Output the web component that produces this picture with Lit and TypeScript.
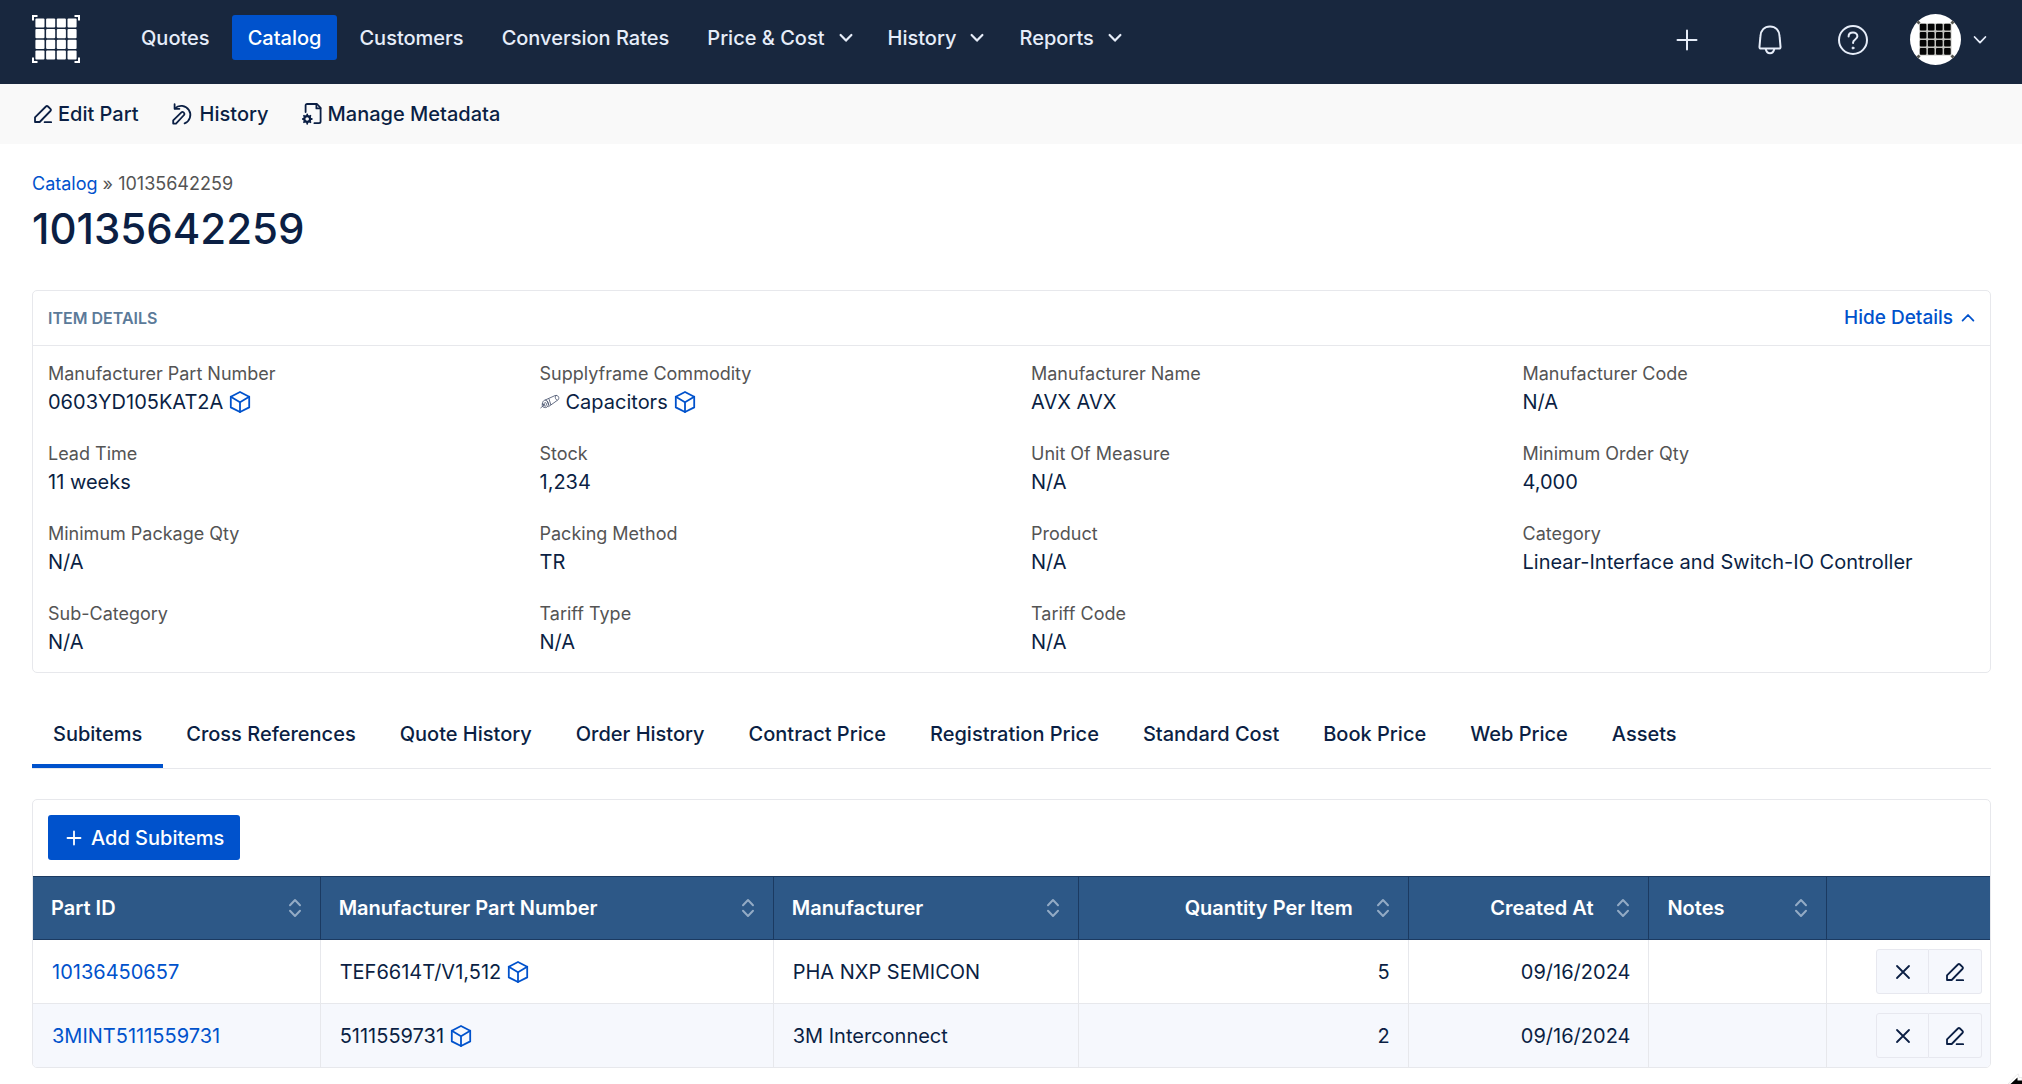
import { LitElement, html, svg, css, nothing } from "lit";
import { customElement, property, state } from "lit/decorators.js";
import { classMap } from "lit/directives/class-map.js";

const GRID = [0, 1, 2, 3];

const ICONS: Record<string, { w: number; h: number; body: unknown }> = {
  pencil: {
    w: 18,
    h: 18,
    body: svg`<path d="M1 17v-4.700L11.900 1.500a1.500 1.500 0 0 1 2.100 0l2.400 2.400a1.500 1.500 0 0 1 0 2.100L5.700 17z"/><path d="M10.600 17.200h6.600"/>`,
  },
  history: {
    w: 22,
    h: 22,
    body: svg`<path d="M2.600 1.200v4.600h4.800"/><path d="M2.900 5.400A9.100 9.100 0 1 1 12.600 20.400"/><path d="M1.200 20.600v-3.200l8.200-8a1.500 1.500 0 0 1 2.100 0l.5.5a1.500 1.500 0 0 1 0 2.100l-8 8.600z"/>`,
  },
  metadata: {
    w: 20,
    h: 22,
    body: svg`<path d="M3.600 9V2.600c0-1 .6-1.600 1.600-1.600H15l3.600 3.800v13.800c0 1-.6 1.600-1.600 1.600h-4.600"/><path d="M14.400 1.200v4.200h4"/><circle cx="5.200" cy="16" r="2.900" stroke-width="2.200"/><path d="M5.200 11.400v1.400M5.200 19.200v1.600M.8 16H2M8.400 16h1.400M2 12.800l1 1M7.400 18.200l1 1M8.400 12.800l-1 1M3 18.200l-1 1"/>`,
  },
  cube: {
    w: 22,
    h: 22,
    body: svg`<path d="M11 1l9.200 4.800v10.600L11 21l-9.200-4.600V5.800z"/><path d="M1.800 5.800L11 11.200l9.200-5.400M11 11.200V21"/>`,
  },
  capacitor: {
    w: 20,
    h: 16,
    body: svg`<path d="M5.200 6L15 1.600c3-1 5.200 2.400 2.800 4.400L8.600 12.600"/><path d="M16.200 1.600c-1.600 1-1.200 3.200.8 4.600M2.400 10c0-2.800 1.800-4.400 3.800-3.600s2.800 3.600 1.800 5.600-3.800 2-5 .8-.6-1.600-.6-2.800z"/><path d="M3.800 10.400c.2-1.600 1.200-2.200 2-1.600s1 2 .2 3-2.200.2-2.200-1.400zM.8 13.800l3.600-3M7 7l1.800 3.800M9 5l1.800 5.600"/>`,
  },
  plus: { w: 22, h: 22, body: svg`<path d="M11 1.500v19M1.500 11h19"/>` },
  bell: {
    w: 26,
    h: 30,
    body: svg`<path d="M3.400 11.400C3.600 5.400 7.400 1.400 13 1.400s9.400 4 9.600 10l.9 10.200c.2 1.200-.4 2-1.500 2H4c-1.100 0-1.700-.8-1.500-2z"/><path d="M8.800 24c.4 2.600 2 4.200 4.200 4.200s3.800-1.600 4.200-4.200"/>`,
  },
  help: {
    w: 32,
    h: 32,
    body: svg`<circle cx="16" cy="16" r="14"/><path d="M11.600 12.400c0-2.600 2-4 4.400-4s4.400 1.600 4.400 3.900c0 3.100-4.300 3.200-4.300 6.100v.6"/><circle cx="16" cy="24" r="1" fill="currentColor" stroke-width="1"/>`,
  },
  down: { w: 14, h: 10, body: svg`<path d="M1.600 2L7 7.600 12.400 2"/>` },
  up: { w: 14, h: 10, body: svg`<path d="M1.600 7.600L7 2l5.400 5.600"/>` },
  sort: { w: 14, h: 20, body: svg`<path d="M2 7.200L7 2l5 5.200M2 12.800L7 18l5-5.200"/>` },
  close: { w: 16, h: 16, body: svg`<path d="M2 2l12 12M14 2L2 14"/>` },
};

@customElement("line-icon")
class LineIcon extends LitElement {
  @property() name = "plus";
  @property({ type: Number }) weight = 2;

  static styles = css`
    :host {
      display: inline-flex;
      flex: none;
    }
    .glyph {
      display: block;
      fill: none;
      stroke: currentColor;
      stroke-linecap: round;
      stroke-linejoin: round;
    }
  `;

  render() {
    const icon = ICONS[this.name];
    return html`<svg
      class="glyph"
      width=${icon.w}
      height=${icon.h}
      viewBox="0 0 ${icon.w} ${icon.h}"
      stroke-width=${this.weight}
      aria-hidden="true"
    >
      ${icon.body}
    </svg>`;
  }
}

@customElement("app-header")
class AppHeader extends LitElement {
  @state() private current = "Catalog";

  private readonly items = [
    { label: "Quotes" },
    { label: "Catalog" },
    { label: "Customers" },
    { label: "Conversion Rates" },
    { label: "Price & Cost", menu: true },
    { label: "History", menu: true },
    { label: "Reports", menu: true },
  ];

  static styles = css`
    :host {
      display: block;
    }
    .bar {
      display: flex;
      align-items: flex-start;
      padding: 14px 32px 19px;
      background: #18273e;
      color: #e6edf9;
    }
    .logo {
      display: block;
      flex: none;
      margin-top: 1px;
    }
    .nav {
      display: flex;
      gap: 6px;
      margin: 1px 0 0 45px;
    }
    .item {
      display: flex;
      align-items: center;
      height: 45px;
      box-sizing: border-box;
      padding: 0 16px;
      border: 0;
      border-radius: 3px;
      background: none;
      color: inherit;
      font: inherit;
      font-weight: 500;
      text-decoration: none;
      white-space: nowrap;
      cursor: pointer;
    }
    .item.menu {
      gap: 14px;
      padding-right: 13px;
    }
    .item.current {
      background: #0052cc;
      color: #fff;
    }
    .tools {
      display: flex;
      align-items: center;
      gap: 51px;
      margin-left: auto;
    }
    .tool,
    .account {
      display: flex;
      align-items: center;
      justify-content: center;
      padding: 0;
      border: 0;
      background: none;
      color: inherit;
      cursor: pointer;
    }
    .tool {
      width: 32px;
      height: 51px;
    }
    .account {
      gap: 12px;
      margin-left: -10px;
      padding-right: 3px;
    }
  `;

  private cells(start: number, pitch: number, size: number) {
    return GRID.map((r) =>
      GRID.map(
        (c) => svg`<rect x=${start + c * pitch} y=${start + r * pitch} width=${size} height=${size} rx="1"/>`
      )
    );
  }

  render() {
    return html`
      <header class="bar">
        <svg class="logo" width="48" height="48" viewBox="0 0 48 48" role="img" aria-label="Home">
          <g fill="#fff">${this.cells(3.4, 10.7, 9.1)}</g>
          <path
            d="M1 5.500V1H5.500M42.500 1H47V5.500M1 42.500V47H5.500M42.500 47H47V42.500"
            fill="none" stroke="#fff" stroke-width="2"
          />
        </svg>
        <nav class="nav" aria-label="Main">
          ${this.items.map((item) => {
            const classes = classMap({
              item: true,
              menu: !!item.menu,
              current: item.label === this.current,
            });
            return item.menu
              ? html`<button class=${classes} type="button" aria-haspopup="true">
                  ${item.label}<line-icon name="down" weight="2.2"></line-icon>
                </button>`
              : html`<a
                  class=${classes}
                  href="#"
                  aria-current=${item.label === this.current ? "page" : nothing}
                  @click=${() => (this.current = item.label)}
                  >${item.label}</a
                >`;
          })}
        </nav>
        <div class="tools">
          <button class="tool" type="button" aria-label="Create"><line-icon name="plus"></line-icon></button>
          <button class="tool" type="button" aria-label="Notifications"><line-icon name="bell"></line-icon></button>
          <button class="tool" type="button" aria-label="Help"><line-icon name="help"></line-icon></button>
          <button class="account" type="button" aria-label="Account">
            <svg width="51" height="51" viewBox="0 0 51 51" aria-hidden="true">
              <circle cx="25.5" cy="25.5" r="25.5" fill="#fff" />
              <rect x="9.5" y="9.5" width="32" height="32" fill="#c4c4c0" />
              <g fill="#050505">${this.cells(9.8, 8.1, 6.6)}</g>
              <path
                d="M7.500 9.500l2-2M41.500 7.500l2 2M7.500 41.500l2 2M41.500 43.500l2-2"
                stroke="#55554f" stroke-width="3"
              />
            </svg>
            <line-icon name="down" weight="1.8"></line-icon>
          </button>
        </div>
      </header>
    `;
  }
}

interface Detail {
  label: string;
  value: string;
  part?: boolean;
  glyph?: string;
}

const DETAILS: Detail[] = [
  { label: "Manufacturer Part Number", value: "0603YD105KAT2A", part: true },
  { label: "Supplyframe Commodity", value: "Capacitors", part: true, glyph: "capacitor" },
  { label: "Manufacturer Name", value: "AVX AVX" },
  { label: "Manufacturer Code", value: "N/A" },
  { label: "Lead Time", value: "11 weeks" },
  { label: "Stock", value: "1,234" },
  { label: "Unit Of Measure", value: "N/A" },
  { label: "Minimum Order Qty", value: "4,000" },
  { label: "Minimum Package Qty", value: "N/A" },
  { label: "Packing Method", value: "TR" },
  { label: "Product", value: "N/A" },
  { label: "Category", value: "Linear-Interface and Switch-IO Controller" },
  { label: "Sub-Category", value: "N/A" },
  { label: "Tariff Type", value: "N/A" },
  { label: "Tariff Code", value: "N/A" },
];

@customElement("item-details")
class ItemDetails extends LitElement {
  @state() private open = true;

  static styles = css`
    :host {
      display: block;
    }
    .card {
      border: 1px solid #e7e8ec;
      border-radius: 5px;
    }
    .head {
      display: flex;
      align-items: center;
      justify-content: space-between;
      height: 54px;
      padding: 0 15px;
    }
    .title {
      margin: 0;
      color: #5b7a99;
      font-size: 16px;
      font-weight: 600;
    }
    .toggle {
      display: flex;
      align-items: center;
      gap: 8px;
      padding: 0;
      border: 0;
      background: none;
      color: #0052cc;
      font: inherit;
      font-size: 19px;
      font-weight: 500;
      cursor: pointer;
    }
    .grid {
      display: grid;
      grid-template-columns: repeat(4, 1fr);
      gap: 24px 39px;
      margin: 0;
      padding: 14px 15px 16px;
      border-top: 1px solid #e7e8ec;
    }
    .label {
      color: #545454;
      font-size: 18px;
      line-height: 28px;
    }
    .value {
      display: flex;
      align-items: center;
      gap: 6px;
      margin: 0;
      line-height: 28px;
      white-space: nowrap;
    }
    .cube {
      color: #0052cc;
    }
    .glyph {
      color: #3f4a66;
    }
  `;

  render() {
    return html`
      <section class="card">
        <div class="head">
          <h2 class="title">ITEM DETAILS</h2>
          <button class="toggle" type="button" aria-expanded=${this.open} @click=${() => (this.open = !this.open)}>
            ${this.open ? "Hide Details" : "Show Details"}
            <line-icon name=${this.open ? "up" : "down"} weight="1.8"></line-icon>
          </button>
        </div>
        ${this.open
          ? html`<dl class="grid">
              ${DETAILS.map(
                (d) => html`<div>
                  <dt class="label">${d.label}</dt>
                  <dd class="value">
                    ${d.glyph ? html`<line-icon class="glyph" name=${d.glyph} weight="0.8"></line-icon>` : nothing}
                    <span>${d.value}</span>
                    ${d.part ? html`<line-icon class="cube" name="cube" weight="1.8"></line-icon>` : nothing}
                  </dd>
                </div>`
              )}
            </dl>`
          : nothing}
      </section>
    `;
  }
}

const COLUMNS = [
  { key: "id", label: "Part ID", share: 14.7 },
  { key: "mpn", label: "Manufacturer Part Number", share: 23.15 },
  { key: "maker", label: "Manufacturer", share: 15.6 },
  { key: "qty", label: "Quantity Per Item", share: 16.85, end: true },
  { key: "created", label: "Created At", share: 12.3, end: true },
  { key: "notes", label: "Notes", share: 9.05 },
];

const ROWS = [
  { id: "10136450657", mpn: "TEF6614T/V1,512", maker: "PHA NXP SEMICON", qty: 5, created: "09/16/2024", notes: "" },
  { id: "3MINT5111559731", mpn: "5111559731", maker: "3M Interconnect", qty: 2, created: "09/16/2024", notes: "" },
];

@customElement("subitem-table")
class SubitemTable extends LitElement {
  static styles = css`
    :host {
      display: block;
    }
    .card {
      overflow: hidden;
      border: 1px solid #e7e8ec;
      border-radius: 5px;
    }
    .actions {
      padding: 15px 15px 16px;
    }
    .add {
      display: flex;
      align-items: center;
      gap: 9px;
      height: 45px;
      padding: 0 16px 0 18px;
      border: 0;
      border-radius: 3px;
      background: #0052cc;
      color: #fff;
      font: inherit;
      font-weight: 500;
      cursor: pointer;
    }
    .plus {
      width: 16px;
      height: 16px;
    }
    .table {
      width: 100%;
      border-collapse: separate;
      border-spacing: 0;
      table-layout: fixed;
    }
    .th {
      box-sizing: border-box;
      height: 64px;
      padding: 0 18px;
      border: solid #1b3a61;
      border-width: 1px 1px 1px 0;
      background: #2d5887;
      color: #fff;
      font-weight: 600;
      text-align: left;
      white-space: nowrap;
    }
    .th.last {
      border-right: 0;
    }
    .sort {
      display: flex;
      align-items: center;
      justify-content: space-between;
      gap: 23px;
      width: 100%;
      padding: 0;
      border: 0;
      background: none;
      color: inherit;
      font: inherit;
      cursor: pointer;
    }
    .sort.end {
      justify-content: flex-end;
    }
    .arrows {
      color: #93abc5;
    }
    .td {
      box-sizing: border-box;
      height: 64px;
      padding: 0 18px 0 19px;
      border-right: 1px solid #e7e8ec;
      border-bottom: 1px solid #e7e8ec;
      white-space: nowrap;
    }
    .td.end {
      text-align: right;
    }
    .td.last {
      padding: 0 8px;
      border-right: 0;
    }
    .row:nth-child(even) {
      background: #f6f8fd;
    }
    .row:last-child .td {
      height: 63px;
      border-bottom: 0;
    }
    .link {
      color: #0052cc;
      text-decoration: none;
    }
    .part {
      display: flex;
      align-items: center;
      gap: 6px;
    }
    .cube {
      color: #0052cc;
    }
    .group {
      display: flex;
      justify-content: flex-end;
    }
    .act {
      display: flex;
      align-items: center;
      justify-content: center;
      width: 53px;
      height: 45px;
      padding: 0;
      border: 1px solid #e7e8ef;
      background: #f6f8fd;
      color: #0b1f44;
      cursor: pointer;
    }
    .act.first {
      border-radius: 3px 0 0 3px;
    }
    .act.second {
      border-left: 0;
      border-radius: 0 3px 3px 0;
    }
  `;

  render() {
    return html`
      <section class="card">
        <div class="actions">
          <button class="add" type="button">
            <svg class="plus" viewBox="0 0 16 16" fill="none" stroke="currentColor" stroke-width="1.8" stroke-linecap="round" aria-hidden="true">
              <path d="M8 1.500v13M1.500 8h13" />
            </svg>
            Add Subitems
          </button>
        </div>
        <table class="table">
          <colgroup>
            ${COLUMNS.map((c) => html`<col style="width:${c.share}%" />`)}
            <col />
          </colgroup>
          <thead>
            <tr>
              ${COLUMNS.map(
                (c) => html`<th class="th" scope="col">
                  <button class=${classMap({ sort: true, end: !!c.end })} type="button">
                    ${c.label}<line-icon class="arrows" name="sort" weight="2"></line-icon>
                  </button>
                </th>`
              )}
              <th class="th last" scope="col" aria-label="Actions"></th>
            </tr>
          </thead>
          <tbody>
            ${ROWS.map(
              (r) => html`<tr class="row">
                <td class="td"><a class="link" href="#">${r.id}</a></td>
                <td class="td">
                  <span class="part">${r.mpn}<line-icon class="cube" name="cube" weight="1.8"></line-icon></span>
                </td>
                <td class="td">${r.maker}</td>
                <td class="td end">${r.qty}</td>
                <td class="td end">${r.created}</td>
                <td class="td">${r.notes}</td>
                <td class="td last">
                  <div class="group">
                    <button class="act first" type="button" aria-label="Remove"><line-icon name="close" weight="1.8"></line-icon></button>
                    <button class="act second" type="button" aria-label="Edit"><line-icon name="pencil" weight="1.8"></line-icon></button>
                  </div>
                </td>
              </tr>`
            )}
          </tbody>
        </table>
      </section>
    `;
  }
}

const TABS = [
  "Subitems",
  "Cross References",
  "Quote History",
  "Order History",
  "Contract Price",
  "Registration Price",
  "Standard Cost",
  "Book Price",
  "Web Price",
  "Assets",
];

@customElement("app-root")
class AppRoot extends LitElement {
  @state() private tab = TABS[0];

  static styles = css`
    :host {
      display: block;
      min-height: 100vh;
      background: #fff;
      color: #0b1f44;
      font-family: Inter, "Liberation Sans", sans-serif;
      font-size: 20px;
      line-height: 30px;
    }
    .toolbar {
      display: flex;
      align-items: center;
      gap: 33px;
      height: 60px;
      padding: 0 34px;
      background: #f9f9f9;
    }
    .tool {
      display: flex;
      align-items: center;
      gap: 6px;
      padding: 0;
      border: 0;
      background: none;
      color: inherit;
      font: inherit;
      font-weight: 500;
      cursor: pointer;
    }
    .page {
      padding: 26px 31px 15px 32px;
    }
    .crumbs {
      color: #545454;
      font-size: 18px;
      line-height: 28px;
    }
    .link {
      color: #0052cc;
      text-decoration: none;
    }
    .title {
      margin: 5px 0 35px;
      font-size: 42px;
      font-weight: 500;
      line-height: 52px;
    }
    .tabs {
      display: flex;
      gap: 2px;
      margin: 30px 0 30px;
      border-bottom: 1px solid #e7e8ec;
    }
    .tab {
      height: 65px;
      padding: 0 21px;
      border: 0;
      border-bottom: 4px solid transparent;
      background: none;
      color: inherit;
      font: inherit;
      font-weight: 500;
      cursor: pointer;
    }
    .tab.current {
      border-bottom-color: #0052cc;
    }
    .pointer {
      position: fixed;
      right: 0;
      bottom: 0;
    }
  `;

  render() {
    return html`
      <app-header></app-header>
      <div class="toolbar" role="toolbar" aria-label="Part actions">
        <button class="tool" type="button"><line-icon name="pencil" weight="1.8"></line-icon>Edit Part</button>
        <button class="tool" type="button"><line-icon name="history" weight="1.8"></line-icon>History</button>
        <button class="tool" type="button"><line-icon name="metadata" weight="1.8"></line-icon>Manage Metadata</button>
      </div>
      <main class="page">
        <nav class="crumbs" aria-label="Breadcrumb"><a class="link" href="#">Catalog</a> » 10135642259</nav>
        <h1 class="title">10135642259</h1>
        <item-details></item-details>
        <div class="tabs" role="tablist">
          ${TABS.map(
            (t) => html`<button
              class=${classMap({ tab: true, current: t === this.tab })}
              role="tab"
              type="button"
              aria-selected=${t === this.tab}
              @click=${() => (this.tab = t)}
            >
              ${t}
            </button>`
          )}
        </div>
        <subitem-table></subitem-table>
      </main>
      <svg class="pointer" width="14" height="12" viewBox="0 0 14 12" aria-hidden="true">
        <path d="M0 12L9 2.500l1.500-.5.500 3.500h3V12z" fill="#fff" stroke="#ddd" stroke-width=".6" />
        <path d="M2.500 12L9.500 5.500V8.500H14V12z" fill="#000" />
      </svg>
    `;
  }
}
